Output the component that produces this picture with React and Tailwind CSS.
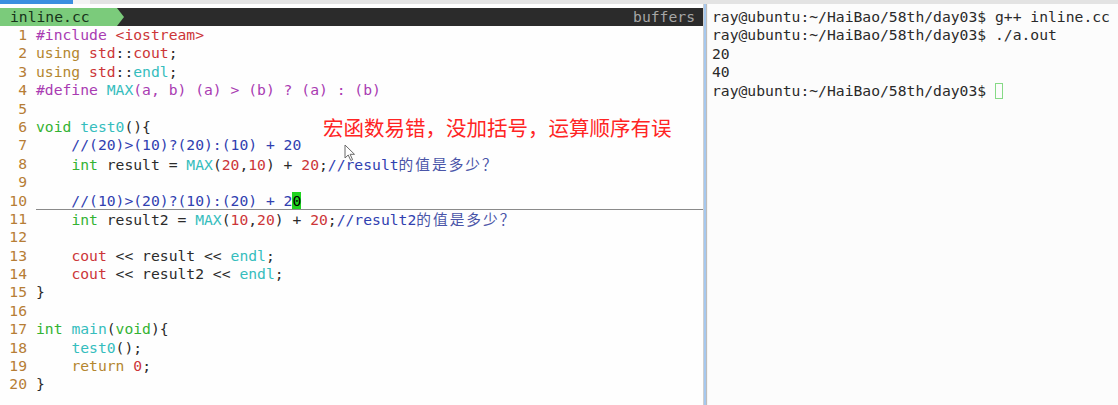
const C = {
  n: "text-[#b67d35]",
  p: "text-[#a93bb2]",
  r: "text-[#cc3538]",
  t: "text-[#35bdbd]",
  g: "text-[#33b333]",
  b: "text-[#3040b0]",
  k: "text-[#b4862f]",
  d: "text-[#2b2b2b]",
};

const mono = "font-['DejaVu_Sans_Mono','Noto_Sans_CJK_SC',monospace]";

const lines = [
  [["p", "#include "], ["r", "<iostream>"]],
  [["k", "using "], ["r", "std"], ["d", "::"], ["r", "cout"], ["d", ";"]],
  [["k", "using "], ["r", "std"], ["d", "::"], ["t", "endl"], ["d", ";"]],
  [["p", "#define "], ["t", "MAX"], ["p", "(a, b) (a) > (b) ? (a) : (b)"]],
  [],
  [["g", "void "], ["t", "test0"], ["d", "(){"]],
  [["b", "    //(20)>(10)?(20):(10) + 20"]],
  [["d", "    "], ["g", "int"], ["d", " result = "], ["t", "MAX"], ["d", "("], ["r", "20"], ["d", ","], ["r", "10"], ["d", ") + "], ["r", "20"], ["d", ";"], ["b", "//result"], ["cjk", "的值是多少？"]],
  [],
  [["b", "    //(10)>(20)?(10):(20) + 2"], ["cur", "0"]],
  [["d", "    "], ["g", "int"], ["d", " result2 = "], ["t", "MAX"], ["d", "("], ["r", "10"], ["d", ","], ["r", "20"], ["d", ") + "], ["r", "20"], ["d", ";"], ["b", "//result2"], ["cjk", "的值是多少？"]],
  [],
  [["d", "    "], ["r", "cout"], ["d", " << result << "], ["t", "endl"], ["d", ";"]],
  [["d", "    "], ["r", "cout"], ["d", " << result2 << "], ["t", "endl"], ["d", ";"]],
  [["d", "}"]],
  [],
  [["g", "int "], ["t", "main"], ["d", "("], ["g", "void"], ["d", "){"]],
  [["d", "    "], ["t", "test0"], ["d", "();"]],
  [["d", "    "], ["k", "return "], ["r", "0"], ["d", ";"]],
  [["d", "}"]],
];

function Token({ kind, text }) {
  if (kind === "cur") {
    return <span className="bg-[#1fd41f] text-black">{text}</span>;
  }
  if (kind === "cjk") {
    return (
      <span className="text-[#4a55a8] font-['Noto_Sans_CJK_SC',sans-serif] tracking-[2px]">
        {text}
      </span>
    );
  }
  return <span className={C[kind]}>{text}</span>;
}

function CodeLine({ num, tokens }) {
  const cursorLine = num === 10;
  return (
    <div className="flex h-[18.4px] leading-[18.4px] whitespace-pre">
      <span className={`w-[27px] text-right ${C.n}`}>{num}</span>
      <span
        className={`ml-[9px] flex-1 ${
          cursorLine ? "border-b border-[#8a8a8a]" : ""
        }`}
      >
        {tokens.map(([k, t], i) => (
          <Token key={i} kind={k} text={t} />
        ))}
      </span>
    </div>
  );
}

function Pointer() {
  return (
    <svg width="13" height="18" viewBox="0 0 13 18">
      <path
        d="M1 1 L1 14 L4.2 11 L6.8 16.5 L8.6 15.7 L6.1 10.3 L10.5 10.3 Z"
        fill="#ffffff"
        stroke="#6a6a6a"
        strokeWidth="1"
        strokeLinejoin="round"
      />
    </svg>
  );
}

const term = [
  "ray@ubuntu:~/HaiBao/58th/day03$ g++ inline.cc",
  "ray@ubuntu:~/HaiBao/58th/day03$ ./a.out",
  "20",
  "40",
];

export default function App() {
  return (
    <div className={`w-[1118px] h-[405px] flex flex-col bg-white overflow-hidden text-[14.7px] ${mono}`}>
      <div className="flex h-[4px]">
        <div className="w-[73px] bg-[#3b8fe0]" />
        <div className="w-[17px] bg-[#f4f4f4]" />
        <div className="flex-1 bg-[#e3e3e3]" />
      </div>

      <div className="flex flex-1 min-h-0">
        <div className="relative w-[703px] flex flex-col pt-[4px] bg-[#fefefe]">
          <div className="flex h-[18px] leading-[18px]">
            <div className="w-[117px] bg-[#7bcb7b] pl-[10px] text-[#17331a]">inline.cc</div>
            <svg width="7" height="18" viewBox="0 0 7 18" className="bg-[#2b2b2b]">
              <polygon points="0,0 7,9 0,18" fill="#7bcb7b" />
            </svg>
            <div className="flex-1 bg-[#2b2b2b] text-right pr-[8px] text-[#a6a6a6]">buffers</div>
          </div>

          <div>
            {lines.map((tokens, i) => (
              <CodeLine key={i} num={i + 1} tokens={tokens} />
            ))}
          </div>

          <div className="absolute left-[323px] top-[109px] text-[20.5px] leading-[28px] text-[#ff2424] font-['Noto_Sans_CJK_SC',sans-serif]">
            宏函数易错，没加括号，运算顺序有误
          </div>
          <div className="absolute left-[344px] top-[140px]">
            <Pointer />
          </div>
        </div>

        <div className="flex w-[5px]">
          <div className="w-px bg-[#cfcfcf]" />
          <div className="w-[2px] bg-[#a6c8ee]" />
          <div className="w-px bg-[#bdbdbd]" />
          <div className="w-px bg-[#f4f4f4]" />
        </div>

        <div className="flex-1 bg-[#fcfcfc] pl-[4px] pt-[4px] text-[#2a2a2a] whitespace-pre">
          {term.map((t, i) => (
            <div key={i} className="h-[18.4px] leading-[18.4px]">{t}</div>
          ))}
          <div className="h-[18.4px] leading-[18.4px] flex items-center">
            <span>ray@ubuntu:~/HaiBao/58th/day03$ </span>
            <span className="inline-block w-[8px] h-[16px] border border-[#86da86]" />
          </div>
        </div>
      </div>
    </div>
  );
}
